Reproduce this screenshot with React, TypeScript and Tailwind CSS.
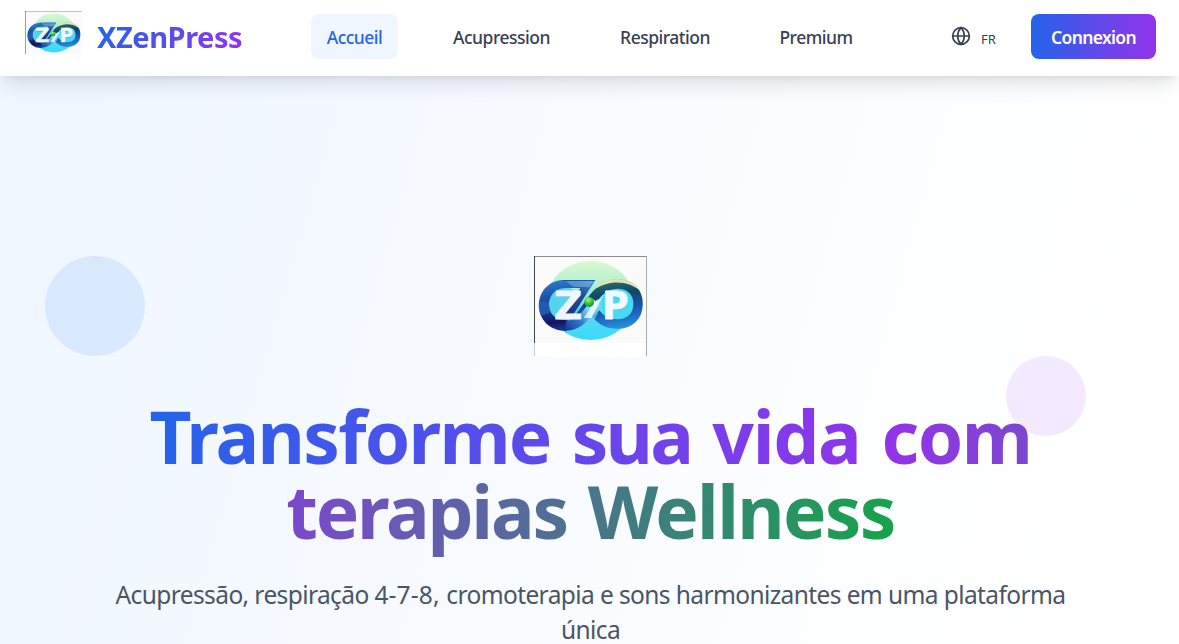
import { Globe } from "lucide-react";

function LogoArt({ className }: { className: string }) {
  return (
    <svg viewBox="0 0 113 87" preserveAspectRatio="none" className={className} aria-label="XZenPress">
      <defs>
        <linearGradient id="disc" x1="0" y1="0" x2="0" y2="1">
          <stop offset="0" stopColor="#dcf9cf" />
          <stop offset="0.3" stopColor="#b0f0d2" />
          <stop offset="0.7" stopColor="#4fdcf0" />
          <stop offset="1" stopColor="#3ad9fa" />
        </linearGradient>
        <linearGradient id="left" gradientUnits="userSpaceOnUse" x1="24" y1="22" x2="32" y2="76">
          <stop offset="0" stopColor="#2f7fcb" />
          <stop offset="0.3" stopColor="#1c57ad" />
          <stop offset="0.6" stopColor="#14368a" />
          <stop offset="0.8" stopColor="#141560" />
          <stop offset="1" stopColor="#1b3fa4" />
        </linearGradient>
        <linearGradient id="right" gradientUnits="userSpaceOnUse" x1="82" y1="22" x2="90" y2="74">
          <stop offset="0" stopColor="#2c7478" />
          <stop offset="0.3" stopColor="#0f4765" />
          <stop offset="0.55" stopColor="#1a4fa6" />
          <stop offset="0.8" stopColor="#1f74cd" />
          <stop offset="1" stopColor="#2b9bdc" />
        </linearGradient>
        <linearGradient id="sweep" gradientUnits="userSpaceOnUse" x1="28" y1="72" x2="64" y2="46">
          <stop offset="0" stopColor="#1a2f90" />
          <stop offset="0.45" stopColor="#2f7fd0" />
          <stop offset="0.75" stopColor="#8ed6f3" />
          <stop offset="1" stopColor="#e6fafd" />
        </linearGradient>
        <linearGradient id="slash" gradientUnits="userSpaceOnUse" x1="60" y1="24" x2="34" y2="62">
          <stop offset="0" stopColor="#4b97d6" />
          <stop offset="0.4" stopColor="#1b4f9f" />
          <stop offset="1" stopColor="#1a2f85" />
        </linearGradient>
        <radialGradient id="bead" cx="0.4" cy="0.3" r="0.7">
          <stop offset="0" stopColor="#b0f57c" />
          <stop offset="0.5" stopColor="#3fc832" />
          <stop offset="1" stopColor="#0f9440" />
        </radialGradient>
      </defs>
      <rect width="113" height="87" fill="#fafafa" />
      <ellipse cx="57" cy="44.500" rx="44" ry="39.500" fill="url(#disc)" />
      <ellipse cx="30" cy="49" rx="17" ry="18" fill="#55d3ea" />
      <ellipse cx="85" cy="48" rx="17" ry="18" fill="#45d9f4" />
      <path d="M62 57C67 64 74 68 84 68C97 68 105 60 105 48C105 36 97 28 84 28C64 28 56 50 46 61" fill="none" stroke="url(#right)" strokeWidth="9.500" />
      <path d="M61 24H29C14 25 5 36 5 49C5 64 16 75 33 75L34 64C22 65 15 58 15 48C16 38 22 32 33 32H47L31 56L40 57Z" fill="url(#left)" />
      <path d="M62 24L38 61H26L47 32L38 24Z" fill="url(#slash)" />
      <path d="M32 69.500C46 70 53 58 63 46" fill="none" stroke="url(#sweep)" strokeWidth="10" />
      <path d="M53 66L64 47L71 41L64 58L57 71Z" fill="#67cdf0" opacity="0.75" />
      <path d="M50 62L63 44L68 43L58 62Z" fill="#f2fdff" opacity="0.8" />
      <path d="M59 35C67 26 74 23 84 23C94 23 102 27 106 34C96 26 77 22 59 35Z" fill="#e2e3ae" />
      <path d="M29 24.500H61" stroke="#1a4fa0" strokeWidth="0.900" />
      <path d="M32 25H60L56 31H40Z" fill="#8cc5ea" opacity="0.45" />
      <path d="M5 46L15 46Q15 51 17 56L7 60Q4 52 5 46Z" fill="#2466b8" opacity="0.7" />
      <circle cx="55.700" cy="46" r="4.900" fill="url(#bead)" />
      <g fontFamily="Noto Sans, sans-serif" fontWeight="700" fontSize="39" strokeLinejoin="round">
        <text x="21.500" y="64.500" fill="#1d3f79" opacity="0.35" textLength="27" lengthAdjust="spacingAndGlyphs">Z</text>
        <text x="69" y="64.500" fill="#1d5f79" opacity="0.35" textLength="27" lengthAdjust="spacingAndGlyphs">P</text>
        <text x="21" y="63" fill="#eef7ff" stroke="#eef7ff" strokeWidth="1" textLength="27" lengthAdjust="spacingAndGlyphs">Z</text>
        <text x="68.500" y="63" fill="#f0fbff" stroke="#f0fbff" strokeWidth="1" textLength="27" lengthAdjust="spacingAndGlyphs">P</text>
      </g>
      <rect width="113" height="1" fill="#8c8c8c" />
      <rect width="1" height="87" fill="#444" />
    </svg>
  );
}

const navItems = [
  { label: "Accueil", className: "w-[87px] bg-blue-50 text-[#2563eb]" },
  { label: "Acupression", className: "ml-10 w-[127px] text-[#374151]" },
  { label: "Respiration", className: "ml-10 w-[120px] text-[#374151]" },
  { label: "Premium", className: "ml-10 w-[102px] text-[#374151]" },
];

export default function App() {
  return (
    <div className="flex h-[644px] flex-col overflow-hidden bg-white font-['Noto_Sans',sans-serif]">
      <header className="z-10 flex h-[76px] shrink-0 items-start bg-white pl-[25px] shadow-[0_12.5px_18.75px_-3.75px_rgb(0_0_0/0.1),0_5px_7.5px_-5px_rgb(0_0_0/0.1)]">
        <LogoArt className="mt-[11px] h-[43px] w-[57px] shrink-0" />
        <span className="mt-[16px] ml-[15px] w-[146px] shrink-0 bg-linear-to-r/srgb from-[#2563eb] to-[#9333ea] bg-clip-text text-[29px] leading-[41px] font-bold tracking-[-0.45px] whitespace-nowrap text-transparent">
          XZenPress
        </span>
        <nav className="mt-[14px] ml-[68px] flex shrink-0">
          {navItems.map((item) => (
            <a
              key={item.label}
              className={`flex h-[45px] items-center justify-center rounded-lg pt-[2px] text-[17.5px] font-medium tracking-[-0.5px] whitespace-nowrap ${item.className}`}
            >
              {item.label}
            </a>
          ))}
        </nav>
        <div className="mt-[26px] ml-[84px] flex w-[46px] shrink-0 text-[#374151]">
          <Globe size={20} strokeWidth={2} className="shrink-0" />
          <span className="ml-[10px] pt-[3px] text-[13px] leading-5">FR</span>
        </div>
        <button className="mt-[14px] ml-[34px] h-[45px] w-[125px] shrink-0 rounded-lg bg-linear-to-r/srgb from-[#2563eb] to-[#9333ea] pt-[2px] text-[17.5px] font-semibold tracking-[-0.65px] text-white">
          Connexion
        </button>
      </header>

      <main className="relative h-[568px] shrink-0 overflow-hidden">
        <div className="absolute inset-x-0 top-0 h-[4200px] bg-[linear-gradient(to_bottom_right,#eff6ff,#ffffff_50%,#faf5ff)]" />
        <div className="absolute top-[180px] left-[45px] size-[100px] rounded-full bg-[#bfdbfe] opacity-50" />
        <div className="absolute top-[280px] left-[1006px] size-20 rounded-full bg-[#e9d5ff] opacity-50" />

        <section className="relative flex flex-col items-center pt-[180px] pl-[2px]">
          <div className="flex h-[100px] w-[113px] flex-col border-r border-r-[#aaa] bg-white shadow-[inset_1px_0_0_#ccc]">
            <LogoArt className="h-[87px] w-[112px]" />
          </div>
          <h1 className="mt-[42px] w-[960px] text-center text-[73px] leading-[75px] font-bold [word-spacing:2px] whitespace-nowrap">
            <span className="bg-linear-to-r/srgb from-[#2563eb] via-[#9333ea] to-[#16a34a] bg-clip-text text-transparent">
              <span className="tracking-[-1.75px]">Transforme</span> <span className="tracking-[-2.75px]">sua</span>{" "}
              <span className="tracking-[-1.25px]">vida</span> <span className="tracking-[-1.5px]">com</span>
              <br />
              <span className="tracking-[-2.25px]">terapias</span> <span className="tracking-[-1.7px]">Wellness</span>
            </span>
          </h1>
          <p className="mt-[29px] text-center text-[24.5px] leading-[35px] tracking-[-0.6px] whitespace-nowrap text-[#4b5563]">
            Acupressão, respiração <span className="tracking-[0.15px]">4-7-8, </span>cromoterapia e sons harmonizantes em uma plataforma
            <br />
            única
          </p>
        </section>
      </main>
    </div>
  );
}
